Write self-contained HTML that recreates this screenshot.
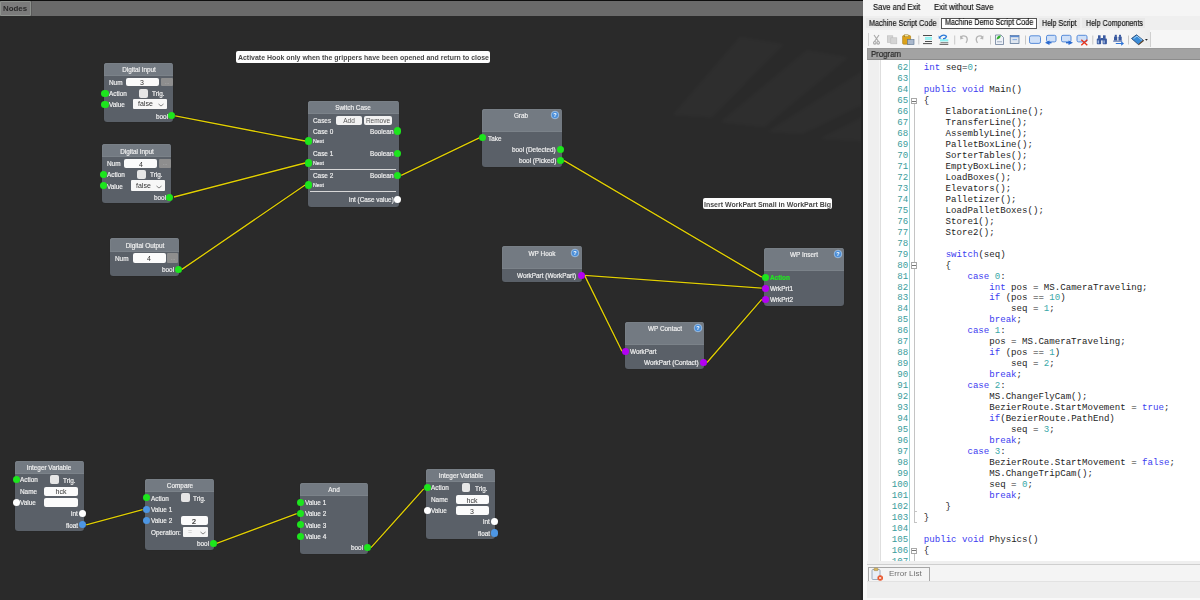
<!DOCTYPE html><html><head><meta charset="utf-8"><style>
html,body{margin:0;padding:0}body{width:1200px;height:600px;overflow:hidden;position:relative;background:#2a2a2a;font-family:"Liberation Sans",sans-serif}
.t{position:absolute;white-space:nowrap;will-change:transform}.s{-webkit-text-stroke:.18px currentColor}
.m{position:absolute;white-space:pre;font-family:"Liberation Mono",monospace}
</style></head><body>
<div style="position:absolute;left:0.00px;top:0.00px;width:863.00px;height:1.00px;background:#0e0e0e"></div>
<div style="position:absolute;left:0.00px;top:1.00px;width:863.00px;height:15.20px;background:#6a6a6a"></div>
<div style="position:absolute;left:0.00px;top:1.00px;width:31.00px;height:14.90px;background:#7b7b7b;border:1px solid #8e928e;box-sizing:border-box;border-radius:1px"></div>
<div style="position:absolute;left:31.00px;top:1.00px;width:1.00px;height:15.20px;background:#5a5a5a"></div>
<div class="t" style="left:-84.60px;width:200px;text-align:center;top:4.26px;line-height:10.27px;font-size:7.9px;color:#2a2a2a;font-weight:700;">Nodes</div>
<svg style="position:absolute;left:0;top:17px" width="863" height="200" viewBox="0 17 863 200"><defs><filter id="bl" x="-20%" y="-20%" width="140%" height="140%"><feGaussianBlur stdDeviation="1.5"/></filter></defs><g fill="#ffffff" fill-opacity=".018" filter="url(#bl)"><polygon points="740.1,37.3 783,44.4 711.5,117.1 673.4,114.7"/><polygon points="806.9,50.4 847.4,57.5 764,126.7 721,121.9"/><polygon points="865,70 865,103 802.1,133.8 768.7,131.4"/><polygon points="865,116 865,141 821,138.6"/></g></svg>
<svg style="position:absolute;left:0;top:0" width="863" height="600">
<line x1="175.20" y1="115.80" x2="305.10" y2="141.00" stroke="#101024" stroke-opacity=".55" stroke-width="2.4"/>
<line x1="174.00" y1="197.00" x2="305.10" y2="163.00" stroke="#101024" stroke-opacity=".55" stroke-width="2.4"/>
<line x1="181.90" y1="269.40" x2="305.10" y2="185.00" stroke="#101024" stroke-opacity=".55" stroke-width="2.4"/>
<line x1="401.20" y1="175.30" x2="479.25" y2="137.90" stroke="#101024" stroke-opacity=".55" stroke-width="2.4"/>
<line x1="564.10" y1="160.60" x2="761.75" y2="277.10" stroke="#101024" stroke-opacity=".55" stroke-width="2.4"/>
<line x1="584.60" y1="275.40" x2="761.75" y2="288.10" stroke="#101024" stroke-opacity=".55" stroke-width="2.4"/>
<line x1="584.60" y1="275.40" x2="622.00" y2="351.20" stroke="#101024" stroke-opacity=".55" stroke-width="2.4"/>
<line x1="707.00" y1="362.50" x2="761.75" y2="299.40" stroke="#101024" stroke-opacity=".55" stroke-width="2.4"/>
<line x1="86.20" y1="524.90" x2="142.70" y2="509.60" stroke="#101024" stroke-opacity=".55" stroke-width="2.4"/>
<line x1="216.60" y1="543.30" x2="296.70" y2="513.60" stroke="#101024" stroke-opacity=".55" stroke-width="2.4"/>
<line x1="371.00" y1="547.60" x2="423.70" y2="488.90" stroke="#101024" stroke-opacity=".55" stroke-width="2.4"/>
<line x1="175.20" y1="115.80" x2="305.10" y2="141.00" stroke="#e2d000" stroke-width="1.35"/>
<line x1="174.00" y1="197.00" x2="305.10" y2="163.00" stroke="#e2d000" stroke-width="1.35"/>
<line x1="181.90" y1="269.40" x2="305.10" y2="185.00" stroke="#e2d000" stroke-width="1.35"/>
<line x1="401.20" y1="175.30" x2="479.25" y2="137.90" stroke="#e2d000" stroke-width="1.35"/>
<line x1="564.10" y1="160.60" x2="761.75" y2="277.10" stroke="#e2d000" stroke-width="1.35"/>
<line x1="584.60" y1="275.40" x2="761.75" y2="288.10" stroke="#e2d000" stroke-width="1.35"/>
<line x1="584.60" y1="275.40" x2="622.00" y2="351.20" stroke="#e2d000" stroke-width="1.35"/>
<line x1="707.00" y1="362.50" x2="761.75" y2="299.40" stroke="#e2d000" stroke-width="1.35"/>
<line x1="86.20" y1="524.90" x2="142.70" y2="509.60" stroke="#e2d000" stroke-width="1.35"/>
<line x1="216.60" y1="543.30" x2="296.70" y2="513.60" stroke="#e2d000" stroke-width="1.35"/>
<line x1="371.00" y1="547.60" x2="423.70" y2="488.90" stroke="#e2d000" stroke-width="1.35"/>
</svg>
<div style="position:absolute;left:235.80px;top:51.20px;width:254.40px;height:11.50px;background:#fdfdfd;border-radius:2px"></div>
<div class="t" style="left:237.60px;top:53.09px;line-height:9.02px;font-size:6.94px;color:#484848;font-weight:700;">Activate Hook only when the grippers have been opened and return to close</div>
<div style="position:absolute;left:702.70px;top:198.30px;width:129.60px;height:10.70px;background:#fdfdfd;border-radius:2px"></div>
<div class="t" style="left:704.40px;top:199.65px;line-height:9.10px;font-size:7.0px;color:#484848;font-weight:700;">Insert WorkPart Small in WorkPart Big</div>
<div style="position:absolute;left:104.00px;top:63.00px;width:69.00px;height:59.00px;background:#5a6068;border-radius:3px;box-shadow:0 0 1px rgba(0,0,0,.4)"></div>
<div style="position:absolute;left:104.00px;top:63.00px;width:69.00px;height:13.00px;background:#737a82;border-radius:3px 3px 0 0;box-shadow:inset 0 -1px 0 #7b8289,inset 1px 1px 0 #787f86"></div>
<div class="t s" style="left:38.50px;width:200px;text-align:center;top:66.34px;line-height:8.32px;font-size:6.4px;color:#f0f0f0;font-weight:400;">Digital Input</div>
<div class="t s" style="left:109.00px;top:78.74px;line-height:8.32px;font-size:6.4px;color:#f0f0f0;font-weight:400;">Num</div>
<div style="position:absolute;left:125.60px;top:77.60px;width:33.60px;height:8.80px;background:#fbfbfb;border-radius:2px"></div>
<div class="t" style="left:42.40px;width:200px;text-align:center;top:78.35px;line-height:9.10px;font-size:7px;color:#333;font-weight:400;">3</div>
<div style="position:absolute;left:161.20px;top:77.60px;width:11.40px;height:8.80px;background:#8e8e8e;border-radius:1px"></div>
<div class="t" style="left:66.90px;width:200px;text-align:center;top:78.50px;line-height:7.80px;font-size:6px;color:#b4b4b4;font-weight:400;">...</div>
<div class="t s" style="left:109.00px;top:89.99px;line-height:8.32px;font-size:6.4px;color:#f0f0f0;font-weight:400;">Action</div>
<div style="position:absolute;left:139.00px;top:88.60px;width:9.00px;height:9.10px;background:#e6e6e6;border-radius:2px"></div>
<div class="t s" style="left:152.00px;top:89.99px;line-height:8.32px;font-size:6.4px;color:#f0f0f0;font-weight:400;">Trig.</div>
<div class="t s" style="left:109.00px;top:101.24px;line-height:8.32px;font-size:6.4px;color:#f0f0f0;font-weight:400;">Value</div>
<div style="position:absolute;left:133.00px;top:99.00px;width:33.80px;height:10.40px;background:#f7f7f7;border-radius:1px"></div>
<div class="t" style="left:138.20px;top:99.35px;line-height:9.10px;font-size:7px;color:#333;font-weight:400;">false</div>
<svg style="position:absolute;left:158.00px;top:103.30px" width="6" height="4"><path d="M0.5 1 L3 3 L5.5 1" stroke="#555" stroke-width="0.7" fill="none"/></svg>
<div class="t s" style="right:1032.40px;top:112.54px;line-height:8.32px;font-size:6.4px;color:#f0f0f0;font-weight:400;">bool</div>
<div style="position:absolute;left:101.40px;top:89.65px;width:7.20px;height:7.20px;border-radius:50%;background:#1de51d"></div>
<div style="position:absolute;left:101.40px;top:100.90px;width:7.20px;height:7.20px;border-radius:50%;background:#1de51d"></div>
<div style="position:absolute;left:168.10px;top:112.20px;width:7.20px;height:7.20px;border-radius:50%;background:#1de51d"></div>
<div style="position:absolute;left:102.20px;top:144.40px;width:69.00px;height:59.00px;background:#5a6068;border-radius:3px;box-shadow:0 0 1px rgba(0,0,0,.4)"></div>
<div style="position:absolute;left:102.20px;top:144.40px;width:69.00px;height:13.00px;background:#737a82;border-radius:3px 3px 0 0;box-shadow:inset 0 -1px 0 #7b8289,inset 1px 1px 0 #787f86"></div>
<div class="t s" style="left:36.70px;width:200px;text-align:center;top:147.74px;line-height:8.32px;font-size:6.4px;color:#f0f0f0;font-weight:400;">Digital Input</div>
<div class="t s" style="left:107.20px;top:160.14px;line-height:8.32px;font-size:6.4px;color:#f0f0f0;font-weight:400;">Num</div>
<div style="position:absolute;left:123.80px;top:159.00px;width:33.60px;height:8.80px;background:#fbfbfb;border-radius:2px"></div>
<div class="t" style="left:40.60px;width:200px;text-align:center;top:159.75px;line-height:9.10px;font-size:7px;color:#333;font-weight:400;">4</div>
<div style="position:absolute;left:159.40px;top:159.00px;width:11.40px;height:8.80px;background:#8e8e8e;border-radius:1px"></div>
<div class="t" style="left:65.10px;width:200px;text-align:center;top:159.90px;line-height:7.80px;font-size:6px;color:#b4b4b4;font-weight:400;">...</div>
<div class="t s" style="left:107.20px;top:171.39px;line-height:8.32px;font-size:6.4px;color:#f0f0f0;font-weight:400;">Action</div>
<div style="position:absolute;left:137.20px;top:170.00px;width:9.00px;height:9.10px;background:#e6e6e6;border-radius:2px"></div>
<div class="t s" style="left:150.20px;top:171.39px;line-height:8.32px;font-size:6.4px;color:#f0f0f0;font-weight:400;">Trig.</div>
<div class="t s" style="left:107.20px;top:182.64px;line-height:8.32px;font-size:6.4px;color:#f0f0f0;font-weight:400;">Value</div>
<div style="position:absolute;left:131.20px;top:180.40px;width:33.80px;height:10.40px;background:#f7f7f7;border-radius:1px"></div>
<div class="t" style="left:136.40px;top:180.75px;line-height:9.10px;font-size:7px;color:#333;font-weight:400;">false</div>
<svg style="position:absolute;left:156.20px;top:184.70px" width="6" height="4"><path d="M0.5 1 L3 3 L5.5 1" stroke="#555" stroke-width="0.7" fill="none"/></svg>
<div class="t s" style="right:1034.20px;top:193.94px;line-height:8.32px;font-size:6.4px;color:#f0f0f0;font-weight:400;">bool</div>
<div style="position:absolute;left:99.60px;top:171.05px;width:7.20px;height:7.20px;border-radius:50%;background:#1de51d"></div>
<div style="position:absolute;left:99.60px;top:182.30px;width:7.20px;height:7.20px;border-radius:50%;background:#1de51d"></div>
<div style="position:absolute;left:166.30px;top:193.60px;width:7.20px;height:7.20px;border-radius:50%;background:#1de51d"></div>
<div style="position:absolute;left:110.30px;top:238.25px;width:68.70px;height:37.30px;background:#5a6068;border-radius:3px;box-shadow:0 0 1px rgba(0,0,0,.4)"></div>
<div style="position:absolute;left:110.30px;top:238.25px;width:68.70px;height:13.25px;background:#737a82;border-radius:3px 3px 0 0;box-shadow:inset 0 -1px 0 #7b8289,inset 1px 1px 0 #787f86"></div>
<div class="t s" style="left:44.65px;width:200px;text-align:center;top:241.59px;line-height:8.32px;font-size:6.4px;color:#f0f0f0;font-weight:400;">Digital Output</div>
<div class="t s" style="left:115.10px;top:254.74px;line-height:8.32px;font-size:6.4px;color:#f0f0f0;font-weight:400;">Num</div>
<div style="position:absolute;left:132.50px;top:253.40px;width:33.00px;height:9.30px;background:#fbfbfb;border-radius:2px"></div>
<div class="t" style="left:49.00px;width:200px;text-align:center;top:254.40px;line-height:9.10px;font-size:7px;color:#333;font-weight:400;">4</div>
<div style="position:absolute;left:167.10px;top:253.40px;width:10.80px;height:9.30px;background:#8e8e8e;border-radius:1px"></div>
<div class="t" style="left:72.50px;width:200px;text-align:center;top:254.55px;line-height:7.80px;font-size:6px;color:#b4b4b4;font-weight:400;">...</div>
<div class="t s" style="right:1025.80px;top:266.14px;line-height:8.32px;font-size:6.4px;color:#f0f0f0;font-weight:400;">bool</div>
<div style="position:absolute;left:174.80px;top:265.80px;width:7.20px;height:7.20px;border-radius:50%;background:#1de51d"></div>
<div style="position:absolute;left:308.00px;top:101.00px;width:90.70px;height:105.50px;background:#5a6068;border-radius:3px;box-shadow:0 0 1px rgba(0,0,0,.4)"></div>
<div style="position:absolute;left:308.00px;top:101.00px;width:90.70px;height:13.20px;background:#737a82;border-radius:3px 3px 0 0;box-shadow:inset 0 -1px 0 #7b8289,inset 1px 1px 0 #787f86"></div>
<div class="t s" style="left:253.35px;width:200px;text-align:center;top:104.34px;line-height:8.32px;font-size:6.4px;color:#f0f0f0;font-weight:400;">Switch Case</div>
<div class="t s" style="left:313.40px;top:116.74px;line-height:8.32px;font-size:6.4px;color:#f0f0f0;font-weight:400;">Cases</div>
<div style="position:absolute;left:335.80px;top:115.70px;width:26.10px;height:9.00px;background:#f2f2f2;border-radius:2px"></div>
<div class="t" style="left:248.85px;width:200px;text-align:center;top:116.88px;line-height:8.45px;font-size:6.5px;color:#555;font-weight:400;">Add</div>
<div style="position:absolute;left:364.20px;top:115.70px;width:27.80px;height:9.00px;background:#f2f2f2;border-radius:2px"></div>
<div class="t" style="left:278.10px;width:200px;text-align:center;top:116.88px;line-height:8.45px;font-size:6.5px;color:#555;font-weight:400;">Remove</div>
<div class="t s" style="left:313.40px;top:127.74px;line-height:8.32px;font-size:6.4px;color:#f0f0f0;font-weight:400;">Case 0</div>
<div class="t s" style="right:806.70px;top:127.74px;line-height:8.32px;font-size:6.4px;color:#f0f0f0;font-weight:400;">Boolean</div>
<div style="position:absolute;left:394.10px;top:127.40px;width:7.20px;height:7.20px;border-radius:50%;background:#1de51d"></div>
<div class="t s" style="left:313.00px;top:138.46px;line-height:6.89px;font-size:5.3px;color:#f0f0f0;font-weight:400;">Next</div>
<div style="position:absolute;left:305.00px;top:137.40px;width:7.20px;height:7.20px;border-radius:50%;background:#1de51d"></div>
<div class="t s" style="left:313.40px;top:149.84px;line-height:8.32px;font-size:6.4px;color:#f0f0f0;font-weight:400;">Case 1</div>
<div class="t s" style="right:806.70px;top:149.84px;line-height:8.32px;font-size:6.4px;color:#f0f0f0;font-weight:400;">Boolean</div>
<div style="position:absolute;left:394.10px;top:149.50px;width:7.20px;height:7.20px;border-radius:50%;background:#1de51d"></div>
<div class="t s" style="left:313.00px;top:160.46px;line-height:6.89px;font-size:5.3px;color:#f0f0f0;font-weight:400;">Next</div>
<div style="position:absolute;left:305.00px;top:159.40px;width:7.20px;height:7.20px;border-radius:50%;background:#1de51d"></div>
<div class="t s" style="left:313.40px;top:172.24px;line-height:8.32px;font-size:6.4px;color:#f0f0f0;font-weight:400;">Case 2</div>
<div class="t s" style="right:806.70px;top:172.24px;line-height:8.32px;font-size:6.4px;color:#f0f0f0;font-weight:400;">Boolean</div>
<div style="position:absolute;left:394.10px;top:171.90px;width:7.20px;height:7.20px;border-radius:50%;background:#1de51d"></div>
<div class="t s" style="left:313.00px;top:182.46px;line-height:6.89px;font-size:5.3px;color:#f0f0f0;font-weight:400;">Next</div>
<div style="position:absolute;left:305.00px;top:181.40px;width:7.20px;height:7.20px;border-radius:50%;background:#1de51d"></div>
<div style="position:absolute;left:310.00px;top:168.70px;width:86.40px;height:1.00px;background:#d8d8d8"></div>
<div style="position:absolute;left:310.00px;top:190.90px;width:86.40px;height:1.00px;background:#d8d8d8"></div>
<div class="t s" style="right:806.70px;top:196.14px;line-height:8.32px;font-size:6.4px;color:#f0f0f0;font-weight:400;">int (Case value)</div>
<div style="position:absolute;left:394.10px;top:195.80px;width:7.20px;height:7.20px;border-radius:50%;background:#ffffff"></div>
<div style="position:absolute;left:481.90px;top:108.75px;width:80.00px;height:58.15px;background:#5a6068;border-radius:3px;box-shadow:0 0 1px rgba(0,0,0,.4)"></div>
<div style="position:absolute;left:481.90px;top:108.75px;width:80.00px;height:23.15px;background:#737a82;border-radius:3px 3px 0 0;box-shadow:inset 0 -1px 0 #7b8289,inset 1px 1px 0 #787f86"></div>
<div class="t s" style="left:421.25px;width:200px;text-align:center;top:112.34px;line-height:8.32px;font-size:6.4px;color:#f0f0f0;font-weight:400;">Grab</div>
<svg style="position:absolute;left:550.00px;top:109.75px" width="10" height="10"><circle cx="5" cy="5" r="3.8" fill="#4a8ed8" stroke="#b4d0ee" stroke-width=".7"/><text x="5" y="7.1" font-size="5.6" font-weight="700" fill="#fff" text-anchor="middle" font-family="Liberation Sans">?</text></svg>
<div class="t s" style="left:487.50px;top:134.64px;line-height:8.32px;font-size:6.4px;color:#f0f0f0;font-weight:400;">Take</div>
<div style="position:absolute;left:479.15px;top:134.30px;width:7.20px;height:7.20px;border-radius:50%;background:#1de51d"></div>
<div class="t s" style="right:644.00px;top:145.84px;line-height:8.32px;font-size:6.4px;color:#f0f0f0;font-weight:400;">bool (Detected)</div>
<div style="position:absolute;left:557.00px;top:145.50px;width:7.20px;height:7.20px;border-radius:50%;background:#1de51d"></div>
<div class="t s" style="right:644.00px;top:157.34px;line-height:8.32px;font-size:6.4px;color:#f0f0f0;font-weight:400;">bool (Picked)</div>
<div style="position:absolute;left:557.00px;top:157.00px;width:7.20px;height:7.20px;border-radius:50%;background:#1de51d"></div>
<div style="position:absolute;left:502.10px;top:246.00px;width:80.00px;height:35.70px;background:#5a6068;border-radius:3px;box-shadow:0 0 1px rgba(0,0,0,.4)"></div>
<div style="position:absolute;left:502.10px;top:246.00px;width:80.00px;height:23.20px;background:#737a82;border-radius:3px 3px 0 0;box-shadow:inset 0 -1px 0 #7b8289,inset 1px 1px 0 #787f86"></div>
<div class="t s" style="left:441.70px;width:200px;text-align:center;top:249.64px;line-height:8.32px;font-size:6.4px;color:#f0f0f0;font-weight:400;">WP Hook</div>
<svg style="position:absolute;left:570.40px;top:247.50px" width="10" height="10"><circle cx="5" cy="5" r="3.8" fill="#4a8ed8" stroke="#b4d0ee" stroke-width=".7"/><text x="5" y="7.1" font-size="5.6" font-weight="700" fill="#fff" text-anchor="middle" font-family="Liberation Sans">?</text></svg>
<div class="t s" style="right:623.75px;top:272.14px;line-height:8.32px;font-size:6.4px;color:#f0f0f0;font-weight:400;">WorkPart (WorkPart)</div>
<div style="position:absolute;left:577.50px;top:271.80px;width:7.20px;height:7.20px;border-radius:50%;background:#b300f2"></div>
<div style="position:absolute;left:764.40px;top:247.75px;width:79.60px;height:58.15px;background:#5a6068;border-radius:3px;box-shadow:0 0 1px rgba(0,0,0,.4)"></div>
<div style="position:absolute;left:764.40px;top:247.75px;width:79.60px;height:23.25px;background:#737a82;border-radius:3px 3px 0 0;box-shadow:inset 0 -1px 0 #7b8289,inset 1px 1px 0 #787f86"></div>
<div class="t s" style="left:704.40px;width:200px;text-align:center;top:251.49px;line-height:8.32px;font-size:6.4px;color:#f0f0f0;font-weight:400;">WP Insert</div>
<svg style="position:absolute;left:832.75px;top:249.10px" width="10" height="10"><circle cx="5" cy="5" r="3.8" fill="#4a8ed8" stroke="#b4d0ee" stroke-width=".7"/><text x="5" y="7.1" font-size="5.6" font-weight="700" fill="#fff" text-anchor="middle" font-family="Liberation Sans">?</text></svg>
<div class="t s" style="left:770.00px;top:273.84px;line-height:8.32px;font-size:6.4px;color:#22e622;font-weight:700;">Action</div>
<div style="position:absolute;left:761.65px;top:273.50px;width:7.20px;height:7.20px;border-radius:50%;background:#1de51d"></div>
<div class="t s" style="left:770.00px;top:284.84px;line-height:8.32px;font-size:6.4px;color:#f0f0f0;font-weight:400;">WrkPrt1</div>
<div style="position:absolute;left:761.65px;top:284.50px;width:7.20px;height:7.20px;border-radius:50%;background:#b300f2"></div>
<div class="t s" style="left:770.00px;top:296.14px;line-height:8.32px;font-size:6.4px;color:#f0f0f0;font-weight:400;">WrkPrt2</div>
<div style="position:absolute;left:761.65px;top:295.80px;width:7.20px;height:7.20px;border-radius:50%;background:#b300f2"></div>
<div style="position:absolute;left:624.80px;top:322.00px;width:79.50px;height:47.00px;background:#5a6068;border-radius:3px;box-shadow:0 0 1px rgba(0,0,0,.4)"></div>
<div style="position:absolute;left:624.80px;top:322.00px;width:79.50px;height:23.00px;background:#737a82;border-radius:3px 3px 0 0;box-shadow:inset 0 -1px 0 #7b8289,inset 1px 1px 0 #787f86"></div>
<div class="t s" style="left:564.50px;width:200px;text-align:center;top:325.24px;line-height:8.32px;font-size:6.4px;color:#f0f0f0;font-weight:400;">WP Contact</div>
<svg style="position:absolute;left:693.00px;top:323.00px" width="10" height="10"><circle cx="5" cy="5" r="3.8" fill="#4a8ed8" stroke="#b4d0ee" stroke-width=".7"/><text x="5" y="7.1" font-size="5.6" font-weight="700" fill="#fff" text-anchor="middle" font-family="Liberation Sans">?</text></svg>
<div class="t s" style="left:630.00px;top:347.94px;line-height:8.32px;font-size:6.4px;color:#f0f0f0;font-weight:400;">WorkPart</div>
<div style="position:absolute;left:621.90px;top:347.60px;width:7.20px;height:7.20px;border-radius:50%;background:#b300f2"></div>
<div class="t s" style="right:501.00px;top:359.24px;line-height:8.32px;font-size:6.4px;color:#f0f0f0;font-weight:400;">WorkPart (Contact)</div>
<div style="position:absolute;left:699.90px;top:358.90px;width:7.20px;height:7.20px;border-radius:50%;background:#b300f2"></div>
<div style="position:absolute;left:14.80px;top:461.00px;width:69.00px;height:70.10px;background:#5a6068;border-radius:3px;box-shadow:0 0 1px rgba(0,0,0,.4)"></div>
<div style="position:absolute;left:14.80px;top:461.00px;width:69.00px;height:12.70px;background:#737a82;border-radius:3px 3px 0 0;box-shadow:inset 0 -1px 0 #7b8289,inset 1px 1px 0 #787f86"></div>
<div class="t s" style="left:-50.70px;width:200px;text-align:center;top:464.34px;line-height:8.32px;font-size:6.4px;color:#f0f0f0;font-weight:400;">Integer Variable</div>
<div class="t s" style="left:19.90px;top:475.74px;line-height:8.32px;font-size:6.4px;color:#f0f0f0;font-weight:400;">Action</div>
<div style="position:absolute;left:50.10px;top:475.10px;width:8.90px;height:8.90px;background:#e6e6e6;border-radius:2px"></div>
<div class="t s" style="left:63.30px;top:476.54px;line-height:8.32px;font-size:6.4px;color:#f0f0f0;font-weight:400;">Trig.</div>
<div class="t s" style="left:20.00px;top:487.84px;line-height:8.32px;font-size:6.4px;color:#f0f0f0;font-weight:400;">Name</div>
<div style="position:absolute;left:44.10px;top:486.50px;width:33.60px;height:9.20px;background:#fbfbfb;border-radius:2px"></div>
<div class="t" style="left:-39.10px;width:200px;text-align:center;top:487.45px;line-height:9.10px;font-size:7px;color:#333;font-weight:400;">hck</div>
<div class="t s" style="left:19.90px;top:498.94px;line-height:8.32px;font-size:6.4px;color:#f0f0f0;font-weight:400;">Value</div>
<div style="position:absolute;left:44.10px;top:497.80px;width:33.60px;height:8.90px;background:#fbfbfb;border-radius:2px"></div>
<div class="t s" style="right:1122.00px;top:510.14px;line-height:8.32px;font-size:6.4px;color:#f0f0f0;font-weight:400;">int</div>
<div class="t s" style="right:1121.80px;top:521.64px;line-height:8.32px;font-size:6.4px;color:#f0f0f0;font-weight:400;">float</div>
<div style="position:absolute;left:12.50px;top:476.10px;width:7.20px;height:7.20px;border-radius:50%;background:#1de51d"></div>
<div style="position:absolute;left:12.50px;top:498.70px;width:7.20px;height:7.20px;border-radius:50%;background:#ffffff"></div>
<div style="position:absolute;left:79.10px;top:509.80px;width:7.20px;height:7.20px;border-radius:50%;background:#ffffff"></div>
<div style="position:absolute;left:79.10px;top:521.30px;width:7.20px;height:7.20px;border-radius:50%;background:#4d96e3"></div>
<div style="position:absolute;left:426.20px;top:469.10px;width:69.00px;height:70.10px;background:#5a6068;border-radius:3px;box-shadow:0 0 1px rgba(0,0,0,.4)"></div>
<div style="position:absolute;left:426.20px;top:469.10px;width:69.00px;height:12.70px;background:#737a82;border-radius:3px 3px 0 0;box-shadow:inset 0 -1px 0 #7b8289,inset 1px 1px 0 #787f86"></div>
<div class="t s" style="left:360.70px;width:200px;text-align:center;top:472.44px;line-height:8.32px;font-size:6.4px;color:#f0f0f0;font-weight:400;">Integer Variable</div>
<div class="t s" style="left:431.30px;top:483.84px;line-height:8.32px;font-size:6.4px;color:#f0f0f0;font-weight:400;">Action</div>
<div style="position:absolute;left:461.50px;top:483.20px;width:8.90px;height:8.90px;background:#e6e6e6;border-radius:2px"></div>
<div class="t s" style="left:474.70px;top:484.64px;line-height:8.32px;font-size:6.4px;color:#f0f0f0;font-weight:400;">Trig.</div>
<div class="t s" style="left:431.40px;top:495.94px;line-height:8.32px;font-size:6.4px;color:#f0f0f0;font-weight:400;">Name</div>
<div style="position:absolute;left:455.50px;top:494.60px;width:33.60px;height:9.20px;background:#fbfbfb;border-radius:2px"></div>
<div class="t" style="left:372.30px;width:200px;text-align:center;top:495.55px;line-height:9.10px;font-size:7px;color:#333;font-weight:400;">hck</div>
<div class="t s" style="left:431.30px;top:507.04px;line-height:8.32px;font-size:6.4px;color:#f0f0f0;font-weight:400;">Value</div>
<div style="position:absolute;left:455.50px;top:505.90px;width:33.60px;height:8.90px;background:#fbfbfb;border-radius:2px"></div>
<div class="t" style="left:372.30px;width:200px;text-align:center;top:506.70px;line-height:9.10px;font-size:7px;color:#333;font-weight:400;">3</div>
<div class="t s" style="right:710.60px;top:518.24px;line-height:8.32px;font-size:6.4px;color:#f0f0f0;font-weight:400;">int</div>
<div class="t s" style="right:710.40px;top:529.74px;line-height:8.32px;font-size:6.4px;color:#f0f0f0;font-weight:400;">float</div>
<div style="position:absolute;left:423.90px;top:484.20px;width:7.20px;height:7.20px;border-radius:50%;background:#1de51d"></div>
<div style="position:absolute;left:423.90px;top:506.80px;width:7.20px;height:7.20px;border-radius:50%;background:#ffffff"></div>
<div style="position:absolute;left:490.50px;top:517.90px;width:7.20px;height:7.20px;border-radius:50%;background:#ffffff"></div>
<div style="position:absolute;left:490.50px;top:529.40px;width:7.20px;height:7.20px;border-radius:50%;background:#4d96e3"></div>
<div style="position:absolute;left:145.10px;top:478.80px;width:69.40px;height:70.90px;background:#5a6068;border-radius:3px;box-shadow:0 0 1px rgba(0,0,0,.4)"></div>
<div style="position:absolute;left:145.10px;top:478.80px;width:69.40px;height:13.00px;background:#737a82;border-radius:3px 3px 0 0;box-shadow:inset 0 -1px 0 #7b8289,inset 1px 1px 0 #787f86"></div>
<div class="t s" style="left:79.80px;width:200px;text-align:center;top:482.14px;line-height:8.32px;font-size:6.4px;color:#f0f0f0;font-weight:400;">Compare</div>
<div class="t s" style="left:151.00px;top:494.64px;line-height:8.32px;font-size:6.4px;color:#f0f0f0;font-weight:400;">Action</div>
<div style="position:absolute;left:180.50px;top:493.30px;width:9.20px;height:9.20px;background:#e6e6e6;border-radius:2px"></div>
<div class="t s" style="left:193.30px;top:494.64px;line-height:8.32px;font-size:6.4px;color:#f0f0f0;font-weight:400;">Trig.</div>
<div class="t s" style="left:151.00px;top:506.34px;line-height:8.32px;font-size:6.4px;color:#f0f0f0;font-weight:400;">Value 1</div>
<div class="t s" style="left:151.00px;top:517.34px;line-height:8.32px;font-size:6.4px;color:#f0f0f0;font-weight:400;">Value 2</div>
<div style="position:absolute;left:180.50px;top:516.20px;width:27.40px;height:8.90px;background:#fbfbfb;border-radius:2px"></div>
<div class="t s" style="left:94.20px;width:200px;text-align:center;top:517.00px;line-height:9.10px;font-size:7px;color:#222;font-weight:400;">2</div>
<div class="t s" style="left:150.80px;top:528.94px;line-height:8.32px;font-size:6.4px;color:#f0f0f0;font-weight:400;">Operation:</div>
<div style="position:absolute;left:182.60px;top:527.00px;width:25.80px;height:9.90px;background:#f7f7f7;border-radius:1px"></div>
<div class="t" style="left:187.80px;top:527.10px;line-height:9.10px;font-size:7px;color:#bbb;font-weight:400;">=</div>
<svg style="position:absolute;left:199.60px;top:531.05px" width="6" height="4"><path d="M0.5 1 L3 3 L5.5 1" stroke="#555" stroke-width="0.7" fill="none"/></svg>
<div class="t s" style="right:991.00px;top:540.04px;line-height:8.32px;font-size:6.4px;color:#f0f0f0;font-weight:400;">bool</div>
<div style="position:absolute;left:142.60px;top:494.30px;width:7.20px;height:7.20px;border-radius:50%;background:#1de51d"></div>
<div style="position:absolute;left:142.60px;top:506.00px;width:7.20px;height:7.20px;border-radius:50%;background:#4d96e3"></div>
<div style="position:absolute;left:142.60px;top:517.00px;width:7.20px;height:7.20px;border-radius:50%;background:#4d96e3"></div>
<div style="position:absolute;left:209.50px;top:539.70px;width:7.20px;height:7.20px;border-radius:50%;background:#1de51d"></div>
<div style="position:absolute;left:299.80px;top:483.10px;width:68.70px;height:70.60px;background:#5a6068;border-radius:3px;box-shadow:0 0 1px rgba(0,0,0,.4)"></div>
<div style="position:absolute;left:299.80px;top:483.10px;width:68.70px;height:13.00px;background:#737a82;border-radius:3px 3px 0 0;box-shadow:inset 0 -1px 0 #7b8289,inset 1px 1px 0 #787f86"></div>
<div class="t s" style="left:234.15px;width:200px;text-align:center;top:486.44px;line-height:8.32px;font-size:6.4px;color:#f0f0f0;font-weight:400;">And</div>
<div class="t s" style="left:305.00px;top:498.94px;line-height:8.32px;font-size:6.4px;color:#f0f0f0;font-weight:400;">Value 1</div>
<div style="position:absolute;left:296.60px;top:498.60px;width:7.20px;height:7.20px;border-radius:50%;background:#1de51d"></div>
<div class="t s" style="left:305.00px;top:510.34px;line-height:8.32px;font-size:6.4px;color:#f0f0f0;font-weight:400;">Value 2</div>
<div style="position:absolute;left:296.60px;top:510.00px;width:7.20px;height:7.20px;border-radius:50%;background:#1de51d"></div>
<div class="t s" style="left:305.00px;top:521.64px;line-height:8.32px;font-size:6.4px;color:#f0f0f0;font-weight:400;">Value 3</div>
<div style="position:absolute;left:296.60px;top:521.30px;width:7.20px;height:7.20px;border-radius:50%;background:#1de51d"></div>
<div class="t s" style="left:305.00px;top:532.94px;line-height:8.32px;font-size:6.4px;color:#f0f0f0;font-weight:400;">Value 4</div>
<div style="position:absolute;left:296.60px;top:532.60px;width:7.20px;height:7.20px;border-radius:50%;background:#1de51d"></div>
<div class="t s" style="right:837.00px;top:544.34px;line-height:8.32px;font-size:6.4px;color:#f0f0f0;font-weight:400;">bool</div>
<div style="position:absolute;left:363.90px;top:544.00px;width:7.20px;height:7.20px;border-radius:50%;background:#1de51d"></div>
<div style="position:absolute;left:861.00px;top:17.00px;width:2.00px;height:583.00px;background:#242424"></div>
<div style="position:absolute;left:863.00px;top:0.00px;width:337.00px;height:600.00px;background:#f0f0f0"></div>
<div style="position:absolute;left:863.00px;top:48.00px;width:5.00px;height:552.00px;background:#f9f9f9"></div>
<div style="position:absolute;left:863.00px;top:0.00px;width:337.00px;height:16.00px;background:#f5f5f5"></div>
<div class="t s" style="left:873.00px;top:1.77px;line-height:11.05px;font-size:8.5px;color:#111;font-weight:400;transform:scaleX(0.9);transform-origin:0 50%;">Save and Exit</div>
<div class="t s" style="left:933.75px;top:1.71px;line-height:11.18px;font-size:8.6px;color:#111;font-weight:400;transform:scaleX(0.9);transform-origin:0 50%;">Exit without Save</div>
<div style="position:absolute;left:863.00px;top:16.00px;width:337.00px;height:14.00px;background:#efefef"></div>
<div style="position:absolute;left:866.00px;top:17.60px;width:72.75px;height:10.70px;background:#e8e8e8"></div>
<div style="position:absolute;left:1039.00px;top:17.60px;width:41.40px;height:10.70px;background:#e8e8e8"></div>
<div style="position:absolute;left:1082.40px;top:17.60px;width:63.10px;height:10.70px;background:#e8e8e8"></div>
<div style="position:absolute;left:941.25px;top:17.50px;width:95.65px;height:11.00px;background:#fff;border:1px solid #555;box-sizing:border-box"></div>
<div class="t s" style="left:868.50px;top:18.27px;line-height:11.05px;font-size:8.5px;color:#111;font-weight:400;transform:scaleX(0.855);transform-origin:0 50%;">Machine Script Code</div>
<div class="t s" style="left:944.75px;top:17.07px;line-height:11.05px;font-size:8.5px;color:#111;font-weight:400;transform:scaleX(0.849);transform-origin:0 50%;">Machine Demo Script Code</div>
<div class="t s" style="left:1041.90px;top:18.27px;line-height:11.05px;font-size:8.5px;color:#111;font-weight:400;transform:scaleX(0.83);transform-origin:0 50%;">Help Script</div>
<div class="t s" style="left:1085.80px;top:18.27px;line-height:11.05px;font-size:8.5px;color:#111;font-weight:400;transform:scaleX(0.836);transform-origin:0 50%;">Help Components</div>
<div style="position:absolute;left:863.00px;top:29.50px;width:337.00px;height:18.50px;background:#f6f6f6"></div>
<div style="position:absolute;left:1128.00px;top:30.00px;width:22.00px;height:17.00px;background:linear-gradient(90deg,#f6f6f6,#ececec)"></div>
<div style="position:absolute;left:868.00px;top:33.00px;width:1.00px;height:13.00px;background:#d0d0d0"></div>
<div style="position:absolute;left:1150.00px;top:32.00px;width:1.00px;height:15.00px;background:#d0d0d0"></div>
<svg style="position:absolute;left:863px;top:30px" width="337" height="18" viewBox="863 30 337 18"><g fill="#c8c8c8"><rect x="918.3" y="35.5" width="1" height="9"/><rect x="954.2" y="35.5" width="1" height="9"/><rect x="990" y="35.5" width="1" height="9"/><rect x="1025" y="35.5" width="1" height="9"/><rect x="1092.3" y="35.5" width="1" height="9"/><rect x="1128" y="35.5" width="1" height="9"/></g><g stroke="#a8a8a8" stroke-width="1.1" fill="none"><path d="M874 35 L878.5 41.5 M879 35 L874.5 41.5"/><circle cx="874.8" cy="42.8" r="1.3"/><circle cx="878.2" cy="42.8" r="1.3"/></g><g fill="#d4d4d4" stroke="#bcbcbc" stroke-width=".6"><rect x="887.3" y="35.8" width="5.5" height="6.5"/><rect x="890.8" y="37.8" width="6" height="6"/></g><rect x="902.6" y="35.6" width="8" height="8.6" rx="1" fill="#dca21a" stroke="#a87810" stroke-width=".6"/><rect x="904.6" y="34.8" width="4" height="2" fill="#f2e2a0" stroke="#8a6a10" stroke-width=".4"/><rect x="907.5" y="39.5" width="6.5" height="5" fill="#aab8cc" stroke="#56708e" stroke-width=".6"/><g><rect x="923" y="35" width="9" height=".9" fill="#3a3a3a"/><rect x="925" y="37" width="7" height="1.8" fill="#8ff2f2"/><rect x="925" y="38.9" width="7" height="1" fill="#8ff2f2"/><rect x="925" y="41" width="7" height=".9" fill="#3a3a3a"/><rect x="923" y="43.2" width="9" height=".9" fill="#3a3a3a"/></g><g><rect x="940" y="39.2" width="8.3" height="2.2" fill="#8ff2f2"/><rect x="940.5" y="42" width="7.8" height=".8" fill="#777"/><rect x="939.5" y="43.8" width="8.8" height=".9" fill="#3a3a3a"/><path d="M940 37 Q943 33.5 946.5 36.2 Q946 39 943 38.6" stroke="#2a78d8" stroke-width="1.2" fill="none"/><path d="M938.6 35.5 L941.5 38.5 L938.8 38.8 Z" fill="#2a78d8"/></g><g stroke="#b4b4b4" stroke-width="1.3" fill="none"><path d="M961 37 Q963 35 966 36.5 Q968.5 39 966 42.8"/><path d="M982.5 37 Q980.5 35 977.5 36.5 Q975 39 977.5 42.8"/></g><path d="M960 35.5 L960.3 39.5 L963.6 38.5 Z" fill="#b4b4b4"/><path d="M983.5 35.5 L983.2 39.5 L979.9 38.5 Z" fill="#b4b4b4"/><path d="M995.5 35 L1001 35 L1003.5 37.5 L1003.5 44.5 L995.5 44.5 Z" fill="#eef2f8" stroke="#5a6e8c" stroke-width=".7"/><path d="M996.5 39.5 Q997 35.5 1000.8 35.6 Q1000.5 39.2 996.5 39.5Z" fill="#2fae2a"/><rect x="997" y="41.5" width="5" height=".7" fill="#8090a8"/><rect x="1010.2" y="35.6" width="8.8" height="8" fill="#dfe6ef" stroke="#4a6890" stroke-width=".7"/><rect x="1010.2" y="35.6" width="8.8" height="1.6" fill="#5a8ad0"/><rect x="1012.5" y="39.3" width="4.5" height=".8" fill="#6a9ade"/><g fill="#cfe0f8" stroke="#4a82d6" stroke-width=".9"><rect x="1029.5" y="35.8" width="11" height="7.6" rx="1.6"/><rect x="1046.5" y="35.3" width="9.5" height="6.6" rx="1.5"/><rect x="1061.5" y="35.3" width="9.5" height="6.6" rx="1.5"/><rect x="1077" y="35.3" width="10" height="6.6" rx="1.5"/></g><path d="M1049.5 40.5 L1045 42.7 L1049.5 44.9 Z" fill="#2a6ad0"/><rect x="1048.5" y="42" width="3" height="1.4" fill="#2a6ad0"/><path d="M1068.5 40.5 L1073 42.7 L1068.5 44.9 Z" fill="#2a6ad0"/><rect x="1066" y="42" width="3" height="1.4" fill="#2a6ad0"/><path d="M1081.3 39.8 L1087.3 45.3 M1087.3 39.8 L1081.3 45.3" stroke="#e8321a" stroke-width="1.3"/><g fill="#3a5aa0"><rect x="1096.8" y="38.6" width="4.3" height="5.6" rx=".8"/><rect x="1102.6" y="38.6" width="4.3" height="5.6" rx=".8"/><rect x="1098" y="35.3" width="2.6" height="3.6"/><rect x="1103" y="35.3" width="2.6" height="3.6"/><rect x="1100.6" y="38" width="2.4" height="2.4"/></g><g fill="#9ab4e0"><rect x="1097.6" y="40.4" width="1.4" height="3"/><rect x="1103.4" y="40.4" width="1.4" height="3"/></g><g fill="#3a5aa0"><rect x="1114" y="36.6" width="3.2" height="4" rx=".6"/><rect x="1118.5" y="36.6" width="3.2" height="4" rx=".6"/><rect x="1114.8" y="34.8" width="2" height="2"/><rect x="1119" y="34.8" width="2" height="2"/><rect x="1113.2" y="40.6" width="9" height="1"/></g><rect x="1115.8" y="43" width="6" height="1" fill="#2a72d8"/><path d="M1121.2 41.3 L1124 43.5 L1121.2 45.7Z" fill="#2a72d8"/><path d="M1131.5 38.5 L1136.5 34.8 L1143.5 40.5 L1138.5 44.6 Z" fill="#3a8cd8" stroke="#1a3a6a" stroke-width=".8"/><path d="M1133.5 38.7 L1137 36 L1142 40.3" stroke="#b8e4ff" stroke-width=".8" fill="none"/><path d="M1138.5 44.6 L1143.5 40.5" stroke="#6a4a2a" stroke-width="1.2"/><path d="M1145 39 L1147.8 39 L1146.4 40.8 Z" fill="#222"/></svg>
<div style="position:absolute;left:867.00px;top:48.00px;width:333.00px;height:12.00px;background:#a3a3a3;border-bottom:1px solid #8c8c8c;border-top:1px solid #9a9a9a;border-left:1px solid #999;box-sizing:border-box"></div>
<div class="t s" style="left:870.80px;top:48.64px;line-height:11.31px;font-size:8.7px;color:#222;font-weight:400;transform:scaleX(0.9);transform-origin:0 50%;">Program</div>
<div style="position:absolute;left:867.00px;top:60.00px;width:333.00px;height:501.00px;background:#ffffff"></div>
<div style="position:absolute;left:867.00px;top:60.00px;width:1.00px;height:501.00px;background:#f9f9f9"></div>
<div style="position:absolute;left:868.00px;top:60.00px;width:11.00px;height:501.00px;background:#efefef"></div>
<div style="position:absolute;left:879.00px;top:60.00px;width:1.00px;height:501.00px;background:#f6f6f6"></div>
<div style="position:absolute;left:880.00px;top:60.00px;width:1.00px;height:501.00px;background:#dedede"></div>
<div style="position:absolute;left:909.30px;top:60.00px;width:1.00px;height:501.00px;background:#a0d4d4"></div>
<div style="position:absolute;left:867px;top:60px;width:333px;height:501px;overflow:hidden">
<div class="m" style="right:291.80px;top:2.10px;line-height:12px;font-size:9.1px;color:#3a9c9c">62</div>
<div class="m" style="left:34.96px;top:2.10px;line-height:12px;font-size:9.1px;color:#1e1e1e">    <b class=k>int</b> seq=<b class=n>0</b>;</div>
<div class="m" style="right:291.80px;top:13.07px;line-height:12px;font-size:9.1px;color:#3a9c9c">63</div>
<div class="m" style="right:291.80px;top:24.04px;line-height:12px;font-size:9.1px;color:#3a9c9c">64</div>
<div class="m" style="left:34.96px;top:24.04px;line-height:12px;font-size:9.1px;color:#1e1e1e">    <b class=k>public</b> <b class=k>void</b> Main()</div>
<div class="m" style="right:291.80px;top:35.01px;line-height:12px;font-size:9.1px;color:#3a9c9c">65</div>
<div class="m" style="left:34.96px;top:35.01px;line-height:12px;font-size:9.1px;color:#1e1e1e">    {</div>
<div class="m" style="right:291.80px;top:45.98px;line-height:12px;font-size:9.1px;color:#3a9c9c">66</div>
<div class="m" style="left:34.96px;top:45.98px;line-height:12px;font-size:9.1px;color:#1e1e1e">        ElaborationLine();</div>
<div class="m" style="right:291.80px;top:56.95px;line-height:12px;font-size:9.1px;color:#3a9c9c">67</div>
<div class="m" style="left:34.96px;top:56.95px;line-height:12px;font-size:9.1px;color:#1e1e1e">        TransferLine();</div>
<div class="m" style="right:291.80px;top:67.92px;line-height:12px;font-size:9.1px;color:#3a9c9c">68</div>
<div class="m" style="left:34.96px;top:67.92px;line-height:12px;font-size:9.1px;color:#1e1e1e">        AssemblyLine();</div>
<div class="m" style="right:291.80px;top:78.89px;line-height:12px;font-size:9.1px;color:#3a9c9c">69</div>
<div class="m" style="left:34.96px;top:78.89px;line-height:12px;font-size:9.1px;color:#1e1e1e">        PalletBoxLine();</div>
<div class="m" style="right:291.80px;top:89.86px;line-height:12px;font-size:9.1px;color:#3a9c9c">70</div>
<div class="m" style="left:34.96px;top:89.86px;line-height:12px;font-size:9.1px;color:#1e1e1e">        SorterTables();</div>
<div class="m" style="right:291.80px;top:100.83px;line-height:12px;font-size:9.1px;color:#3a9c9c">71</div>
<div class="m" style="left:34.96px;top:100.83px;line-height:12px;font-size:9.1px;color:#1e1e1e">        EmptyBoxLine();</div>
<div class="m" style="right:291.80px;top:111.80px;line-height:12px;font-size:9.1px;color:#3a9c9c">72</div>
<div class="m" style="left:34.96px;top:111.80px;line-height:12px;font-size:9.1px;color:#1e1e1e">        LoadBoxes();</div>
<div class="m" style="right:291.80px;top:122.77px;line-height:12px;font-size:9.1px;color:#3a9c9c">73</div>
<div class="m" style="left:34.96px;top:122.77px;line-height:12px;font-size:9.1px;color:#1e1e1e">        Elevators();</div>
<div class="m" style="right:291.80px;top:133.74px;line-height:12px;font-size:9.1px;color:#3a9c9c">74</div>
<div class="m" style="left:34.96px;top:133.74px;line-height:12px;font-size:9.1px;color:#1e1e1e">        Palletizer();</div>
<div class="m" style="right:291.80px;top:144.71px;line-height:12px;font-size:9.1px;color:#3a9c9c">75</div>
<div class="m" style="left:34.96px;top:144.71px;line-height:12px;font-size:9.1px;color:#1e1e1e">        LoadPalletBoxes();</div>
<div class="m" style="right:291.80px;top:155.68px;line-height:12px;font-size:9.1px;color:#3a9c9c">76</div>
<div class="m" style="left:34.96px;top:155.68px;line-height:12px;font-size:9.1px;color:#1e1e1e">        Store1();</div>
<div class="m" style="right:291.80px;top:166.65px;line-height:12px;font-size:9.1px;color:#3a9c9c">77</div>
<div class="m" style="left:34.96px;top:166.65px;line-height:12px;font-size:9.1px;color:#1e1e1e">        Store2();</div>
<div class="m" style="right:291.80px;top:177.62px;line-height:12px;font-size:9.1px;color:#3a9c9c">78</div>
<div class="m" style="right:291.80px;top:188.59px;line-height:12px;font-size:9.1px;color:#3a9c9c">79</div>
<div class="m" style="left:34.96px;top:188.59px;line-height:12px;font-size:9.1px;color:#1e1e1e">        <b class=k>switch</b>(seq)</div>
<div class="m" style="right:291.80px;top:199.56px;line-height:12px;font-size:9.1px;color:#3a9c9c">80</div>
<div class="m" style="left:34.96px;top:199.56px;line-height:12px;font-size:9.1px;color:#1e1e1e">        {</div>
<div class="m" style="right:291.80px;top:210.53px;line-height:12px;font-size:9.1px;color:#3a9c9c">81</div>
<div class="m" style="left:34.96px;top:210.53px;line-height:12px;font-size:9.1px;color:#1e1e1e">            <b class=k>case</b> <b class=n>0</b>:</div>
<div class="m" style="right:291.80px;top:221.50px;line-height:12px;font-size:9.1px;color:#3a9c9c">82</div>
<div class="m" style="left:34.96px;top:221.50px;line-height:12px;font-size:9.1px;color:#1e1e1e">                <b class=k>int</b> pos = MS.CameraTraveling;</div>
<div class="m" style="right:291.80px;top:232.47px;line-height:12px;font-size:9.1px;color:#3a9c9c">83</div>
<div class="m" style="left:34.96px;top:232.47px;line-height:12px;font-size:9.1px;color:#1e1e1e">                <b class=k>if</b> (pos == <b class=n>10</b>)</div>
<div class="m" style="right:291.80px;top:243.44px;line-height:12px;font-size:9.1px;color:#3a9c9c">84</div>
<div class="m" style="left:34.96px;top:243.44px;line-height:12px;font-size:9.1px;color:#1e1e1e">                    seq = <b class=n>1</b>;</div>
<div class="m" style="right:291.80px;top:254.41px;line-height:12px;font-size:9.1px;color:#3a9c9c">85</div>
<div class="m" style="left:34.96px;top:254.41px;line-height:12px;font-size:9.1px;color:#1e1e1e">                <b class=k>break</b>;</div>
<div class="m" style="right:291.80px;top:265.38px;line-height:12px;font-size:9.1px;color:#3a9c9c">86</div>
<div class="m" style="left:34.96px;top:265.38px;line-height:12px;font-size:9.1px;color:#1e1e1e">            <b class=k>case</b> <b class=n>1</b>:</div>
<div class="m" style="right:291.80px;top:276.35px;line-height:12px;font-size:9.1px;color:#3a9c9c">87</div>
<div class="m" style="left:34.96px;top:276.35px;line-height:12px;font-size:9.1px;color:#1e1e1e">                pos = MS.CameraTraveling;</div>
<div class="m" style="right:291.80px;top:287.32px;line-height:12px;font-size:9.1px;color:#3a9c9c">88</div>
<div class="m" style="left:34.96px;top:287.32px;line-height:12px;font-size:9.1px;color:#1e1e1e">                <b class=k>if</b> (pos == <b class=n>1</b>)</div>
<div class="m" style="right:291.80px;top:298.29px;line-height:12px;font-size:9.1px;color:#3a9c9c">89</div>
<div class="m" style="left:34.96px;top:298.29px;line-height:12px;font-size:9.1px;color:#1e1e1e">                    seq = <b class=n>2</b>;</div>
<div class="m" style="right:291.80px;top:309.26px;line-height:12px;font-size:9.1px;color:#3a9c9c">90</div>
<div class="m" style="left:34.96px;top:309.26px;line-height:12px;font-size:9.1px;color:#1e1e1e">                <b class=k>break</b>;</div>
<div class="m" style="right:291.80px;top:320.23px;line-height:12px;font-size:9.1px;color:#3a9c9c">91</div>
<div class="m" style="left:34.96px;top:320.23px;line-height:12px;font-size:9.1px;color:#1e1e1e">            <b class=k>case</b> <b class=n>2</b>:</div>
<div class="m" style="right:291.80px;top:331.20px;line-height:12px;font-size:9.1px;color:#3a9c9c">92</div>
<div class="m" style="left:34.96px;top:331.20px;line-height:12px;font-size:9.1px;color:#1e1e1e">                MS.ChangeFlyCam();</div>
<div class="m" style="right:291.80px;top:342.17px;line-height:12px;font-size:9.1px;color:#3a9c9c">93</div>
<div class="m" style="left:34.96px;top:342.17px;line-height:12px;font-size:9.1px;color:#1e1e1e">                BezierRoute.StartMovement = <b class=k>true</b>;</div>
<div class="m" style="right:291.80px;top:353.14px;line-height:12px;font-size:9.1px;color:#3a9c9c">94</div>
<div class="m" style="left:34.96px;top:353.14px;line-height:12px;font-size:9.1px;color:#1e1e1e">                <b class=k>if</b>(BezierRoute.PathEnd)</div>
<div class="m" style="right:291.80px;top:364.11px;line-height:12px;font-size:9.1px;color:#3a9c9c">95</div>
<div class="m" style="left:34.96px;top:364.11px;line-height:12px;font-size:9.1px;color:#1e1e1e">                    seq = <b class=n>3</b>;</div>
<div class="m" style="right:291.80px;top:375.08px;line-height:12px;font-size:9.1px;color:#3a9c9c">96</div>
<div class="m" style="left:34.96px;top:375.08px;line-height:12px;font-size:9.1px;color:#1e1e1e">                <b class=k>break</b>;</div>
<div class="m" style="right:291.80px;top:386.05px;line-height:12px;font-size:9.1px;color:#3a9c9c">97</div>
<div class="m" style="left:34.96px;top:386.05px;line-height:12px;font-size:9.1px;color:#1e1e1e">            <b class=k>case</b> <b class=n>3</b>:</div>
<div class="m" style="right:291.80px;top:397.02px;line-height:12px;font-size:9.1px;color:#3a9c9c">98</div>
<div class="m" style="left:34.96px;top:397.02px;line-height:12px;font-size:9.1px;color:#1e1e1e">                BezierRoute.StartMovement = <b class=k>false</b>;</div>
<div class="m" style="right:291.80px;top:407.99px;line-height:12px;font-size:9.1px;color:#3a9c9c">99</div>
<div class="m" style="left:34.96px;top:407.99px;line-height:12px;font-size:9.1px;color:#1e1e1e">                MS.ChangeTripCam();</div>
<div class="m" style="right:291.80px;top:418.96px;line-height:12px;font-size:9.1px;color:#3a9c9c">100</div>
<div class="m" style="left:34.96px;top:418.96px;line-height:12px;font-size:9.1px;color:#1e1e1e">                seq = <b class=n>0</b>;</div>
<div class="m" style="right:291.80px;top:429.93px;line-height:12px;font-size:9.1px;color:#3a9c9c">101</div>
<div class="m" style="left:34.96px;top:429.93px;line-height:12px;font-size:9.1px;color:#1e1e1e">                <b class=k>break</b>;</div>
<div class="m" style="right:291.80px;top:440.90px;line-height:12px;font-size:9.1px;color:#3a9c9c">102</div>
<div class="m" style="left:34.96px;top:440.90px;line-height:12px;font-size:9.1px;color:#1e1e1e">        }</div>
<div class="m" style="right:291.80px;top:451.87px;line-height:12px;font-size:9.1px;color:#3a9c9c">103</div>
<div class="m" style="left:34.96px;top:451.87px;line-height:12px;font-size:9.1px;color:#1e1e1e">    }</div>
<div class="m" style="right:291.80px;top:462.84px;line-height:12px;font-size:9.1px;color:#3a9c9c">104</div>
<div class="m" style="right:291.80px;top:473.81px;line-height:12px;font-size:9.1px;color:#3a9c9c">105</div>
<div class="m" style="left:34.96px;top:473.81px;line-height:12px;font-size:9.1px;color:#1e1e1e">    <b class=k>public</b> <b class=k>void</b> Physics()</div>
<div class="m" style="right:291.80px;top:484.78px;line-height:12px;font-size:9.1px;color:#3a9c9c">106</div>
<div class="m" style="left:34.96px;top:484.78px;line-height:12px;font-size:9.1px;color:#1e1e1e">    {</div>
<div class="m" style="right:291.80px;top:495.75px;line-height:12px;font-size:9.1px;color:#3a9c9c">107</div>
</div>
<style>b.k{font-weight:400;color:#3c3cf0}b.n{font-weight:400;color:#3aa8a8}</style>
<div style="position:absolute;left:913.60px;top:104.01px;width:1.00px;height:418.86px;background:#c4c4c4"></div>
<div style="position:absolute;left:913.60px;top:511.40px;width:3.90px;height:1.00px;background:#c4c4c4"></div>
<div style="position:absolute;left:913.60px;top:522.37px;width:3.90px;height:1.00px;background:#c4c4c4"></div>
<div style="position:absolute;left:913.60px;top:553.78px;width:1.00px;height:7.22px;background:#c4c4c4"></div>
<div style="position:absolute;left:911.10px;top:97.81px;width:6.00px;height:6.20px;background:#fff;border:1px solid #a8a8a8;box-sizing:border-box"></div>
<div style="position:absolute;left:912.40px;top:100.51px;width:3.40px;height:0.90px;background:#777"></div>
<div style="position:absolute;left:911.10px;top:262.36px;width:6.00px;height:6.20px;background:#fff;border:1px solid #a8a8a8;box-sizing:border-box"></div>
<div style="position:absolute;left:912.40px;top:265.06px;width:3.40px;height:0.90px;background:#777"></div>
<div style="position:absolute;left:911.10px;top:547.58px;width:6.00px;height:6.20px;background:#fff;border:1px solid #a8a8a8;box-sizing:border-box"></div>
<div style="position:absolute;left:912.40px;top:550.28px;width:3.40px;height:0.90px;background:#777"></div>
<div style="position:absolute;left:867.00px;top:561.00px;width:333.00px;height:3.00px;background:#efefef"></div>
<div style="position:absolute;left:867.00px;top:564.00px;width:333.00px;height:1.00px;background:#cfcfcf"></div>
<div style="position:absolute;left:867.00px;top:565.00px;width:333.00px;height:16.00px;background:#f4f4f4"></div>
<div style="position:absolute;left:868.20px;top:567.10px;width:61.50px;height:13.90px;background:#f4f4f4;border:1px solid #a6a6a6;border-bottom:none;box-sizing:border-box"></div>
<svg style="position:absolute;left:870px;top:567px" width="14" height="14"><rect x="2" y="2.5" width="8" height="10" rx="1" fill="#e8eef6" stroke="#8a9ab0" stroke-width=".8"/><rect x="4" y="1.2" width="4" height="2.4" rx=".6" fill="#d8b860" stroke="#9a7a30" stroke-width=".5"/><circle cx="10.2" cy="11" r="2.8" fill="#e8542a"/><path d="M9 9.8 L11.4 12.2 M11.4 9.8 L9 12.2" stroke="#fff" stroke-width=".8"/></svg>
<div class="t" style="left:888.60px;top:568.77px;line-height:10.47px;font-size:8.05px;color:#6e6e6e;font-weight:400;">Error List</div>
<div style="position:absolute;left:867.00px;top:581.00px;width:333.00px;height:1.00px;background:#e2e2e2"></div>
<div style="position:absolute;left:867.00px;top:582.00px;width:333.00px;height:16.00px;background:#eeeeee"></div>
<div style="position:absolute;left:867.00px;top:598.00px;width:333.00px;height:2.00px;background:#f8f8f8"></div>
</body></html>
